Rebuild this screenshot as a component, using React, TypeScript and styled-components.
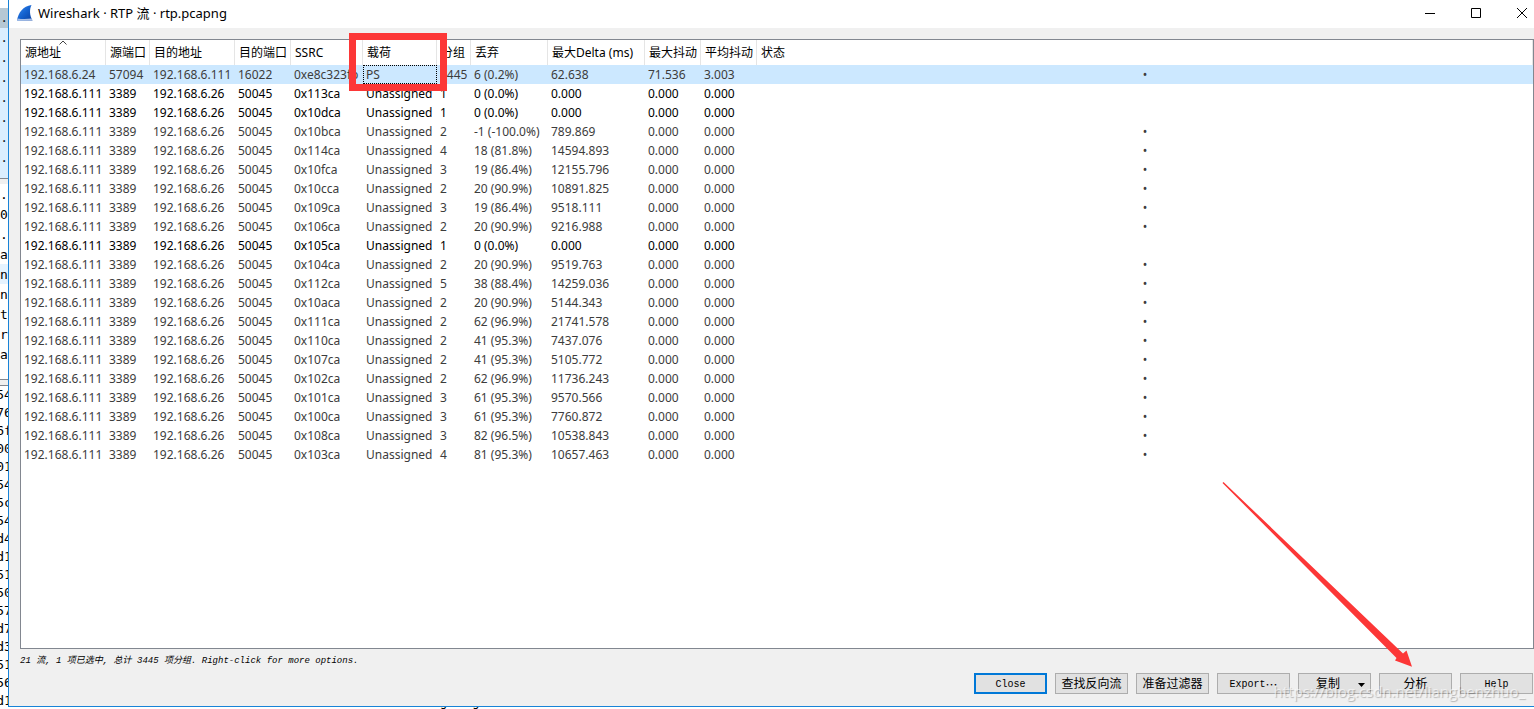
import React from "react";
import styled, { createGlobalStyle, css } from "styled-components";

const uiFont = `"Noto Sans", "Noto Sans CJK SC", sans-serif`;
const monoFont = `"DejaVu Sans Mono", monospace`;
const songFont = `"Liberation Mono", "Noto Sans CJK SC", monospace`;
const red = "#fc3737";

const GlobalStyle = createGlobalStyle`
  *, *::before, *::after { box-sizing: border-box; }
  body { margin: 0; background: #fff; color: #000; font: 12px ${uiFont}; }
  button { font: inherit; color: inherit; padding: 0; border: 0; background: none; }
`;

const Desktop = styled.div`
  display: grid;
  grid-template-columns: 8px minmax(0, 1fr);
  grid-template-rows: minmax(0, 1fr) 2px;
  height: 100vh;
  min-height: 600px;
  overflow: hidden;
`;

/* The main application window peeking out behind the dialog */
const Behind = styled.div`
  grid-row: 1 / 3;
  display: flex;
  flex-direction: column;
  overflow: hidden;
  background: #f0f0f0;
  font-family: ${monoFont};
`;

const Pane = styled.div<{ $grow?: boolean; $height?: number }>`
  flex: ${(p) => (p.$grow ? "1 1 0" : "none")};
  height: ${(p) => (p.$height ? `${p.$height}px` : "auto")};
  overflow: hidden;
  background: #fff;
  border-top: ${(p) => (p.$grow ? "1px solid #828790" : "0")};
`;

const Splitter = styled.div`
  flex: none;
  height: 6px;
  border-top: 1px solid #828790;
`;

const PacketLine = styled.div<{ $bg: string; $height?: number }>`
  display: flex;
  justify-content: flex-end;
  height: ${(p) => p.$height ?? 20}px;
  line-height: 20px;
  overflow: hidden;
  background: ${(p) => p.$bg};
  color: #12272e;
  font-size: 13px;
`;

const TreeLine = styled.div<{ $active?: boolean }>`
  height: 20px;
  padding-top: 2px;
  font-size: 13px;
  line-height: 18px;
  background: ${(p) => (p.$active ? "#e5f3ff" : "#fff")};
`;

const HexLine = styled.div`
  display: flex;
  justify-content: center;
  height: 18px;
  font-size: 13px;
  line-height: 18px;
`;

const BottomEdge = styled.div`
  display: flex;
  align-items: flex-end;
  gap: 25px;
  padding-left: 432px;
  overflow: hidden;
  font: 12px/14px ${monoFont};
`;

const Dialog = styled.main`
  position: relative;
  display: flex;
  flex-direction: column;
  min-width: 0;
  background: #f0f0f0;
  border: solid #1883d7;
  border-width: 0 0 1px 1px;
`;

const TitleBar = styled.header`
  display: flex;
  align-items: center;
  height: 28px;
  padding: 0 7px 3px 8px;
  background: #fff;
`;

const Title = styled.h1`
  flex: 1;
  margin: 0 0 0 5px;
  font-size: 13px;
  font-weight: 400;
  line-height: 20px;
`;

const WindowControls = styled.div`
  display: flex;
  gap: 35px;
`;

const ControlButton = styled.button`
  display: grid;
  place-items: center;
  width: 11px;
  height: 20px;
`;

const Content = styled.section`
  flex: 1;
  display: flex;
  flex-direction: column;
  min-height: 0;
  padding: 11px 0 12px 11px;
`;

const ListFrame = styled.div`
  flex: 1;
  min-height: 0;
  overflow: hidden;
  background: #fff;
  border: 1px solid #828790;
`;

const StreamTable = styled.table`
  width: 100%;
  table-layout: fixed;
  border-collapse: separate;
  border-spacing: 0;
`;

const Column = styled.col<{ $width?: number }>`
  width: ${(p) => (p.$width ? `${p.$width}px` : "auto")};
`;

const HeadCell = styled.th`
  position: relative;
  height: 25px;
  padding: 0 0 0 4px;
  border-right: 1px solid #e5e5e5;
  font-weight: 400;
  line-height: 24px;
  text-align: left;
  white-space: nowrap;
`;

const SortMark = styled.svg`
  position: absolute;
  top: 0;
  left: 50%;
  margin-left: -4px;
`;

const Row = styled.tr<{ $selected: boolean; $dim: boolean }>`
  color: ${(p) => (p.$dim ? "#3c3c3c" : "#000")};
  background: ${(p) => (p.$selected ? "#cce8ff" : "#fff")};
`;

const Cell = styled.td<{ $focused?: boolean; $center?: boolean }>`
  height: 19px;
  padding: ${(p) => (p.$center ? "0" : "0 0 0 3px")};
  line-height: 19px;
  white-space: nowrap;
  text-align: ${(p) => (p.$center ? "center" : "left")};
  ${(p) =>
    p.$focused &&
    css`
      outline: 1px dotted #000;
      outline-offset: -1px;
    `}
`;

const Hint = styled.p`
  margin: 0;
  height: 24px;
  font: italic 9px/24px ${songFont};
  white-space: nowrap;
`;

const ButtonRow = styled.div`
  display: flex;
  justify-content: flex-end;
  gap: 8px;
  padding-right: 1px;
`;

const PushButton = styled.button<{ $latin?: boolean; $default?: boolean; $menu?: boolean }>`
  && {
    display: flex;
    align-items: center;
    justify-content: ${(p) => (p.$menu ? "space-between" : "center")};
    width: 73px;
    height: 21px;
    padding: ${(p) => (p.$menu ? "2px 5px 0 17px" : "2px 0 0")};
    border: ${(p) => (p.$default ? "2px solid #0078d7" : "1px solid #adadad")};
    background: #e1e1e1;
    font: ${(p) => (p.$latin ? 10 : 12)}px/16px ${songFont};
    white-space: nowrap;
  }
`;

const Ellipsis = styled.span`
  font: 12px/16px "Noto Sans CJK SC", sans-serif;
`;

const HighlightBox = styled.div`
  position: absolute;
  left: 340px;
  top: 33px;
  width: 98px;
  height: 58px;
  border: 7px solid ${red};
  pointer-events: none;
`;

const Arrow = styled.svg`
  position: absolute;
  right: 118px;
  bottom: 36px;
  pointer-events: none;
`;

const Watermark = styled.div`
  position: absolute;
  right: 9px;
  bottom: 4px;
  font: 15px/22px "Open Sans", sans-serif;
  color: rgba(255, 255, 255, 0.6);
  text-shadow: 1px 1px 1px rgba(0, 0, 0, 0.25);
  pointer-events: none;
`;

const columns: { label: string; width?: number }[] = [
  { label: "源地址", width: 85 },
  { label: "源端口", width: 44 },
  { label: "目的地址", width: 85 },
  { label: "目的端口", width: 56 },
  { label: "SSRC", width: 72 },
  { label: "载荷", width: 74 },
  { label: "分组", width: 34 },
  { label: "丢弃", width: 77 },
  { label: "最大Delta (ms)", width: 97 },
  { label: "最大抖动", width: 56 },
  { label: "平均抖动", width: 56 },
  { label: "状态" },
];

const common = (ssrc: string, packets: string, lost: string, delta: string) => [
  "192.168.6.111", "3389", "192.168.6.26", "50045", ssrc, "Unassigned",
  packets, lost, delta, "0.000", "0.000", delta === "0.000" ? "" : "•",
];

const streams = [
  ["192.168.6.24", "57094", "192.168.6.111", "16022", "0xe8c323fb", "PS",
    "3445", "6 (0.2%)", "62.638", "71.536", "3.003", "•"],
  common("0x113ca", "1", "0 (0.0%)", "0.000"),
  common("0x10dca", "1", "0 (0.0%)", "0.000"),
  common("0x10bca", "2", "-1 (-100.0%)", "789.869"),
  common("0x114ca", "4", "18 (81.8%)", "14594.893"),
  common("0x10fca", "3", "19 (86.4%)", "12155.796"),
  common("0x10cca", "2", "20 (90.9%)", "10891.825"),
  common("0x109ca", "3", "19 (86.4%)", "9518.111"),
  common("0x106ca", "2", "20 (90.9%)", "9216.988"),
  common("0x105ca", "1", "0 (0.0%)", "0.000"),
  common("0x104ca", "2", "20 (90.9%)", "9519.763"),
  common("0x112ca", "5", "38 (88.4%)", "14259.036"),
  common("0x10aca", "2", "20 (90.9%)", "5144.343"),
  common("0x111ca", "2", "62 (96.9%)", "21741.578"),
  common("0x110ca", "2", "41 (95.3%)", "7437.076"),
  common("0x107ca", "2", "41 (95.3%)", "5105.772"),
  common("0x102ca", "2", "62 (96.9%)", "11736.243"),
  common("0x101ca", "3", "61 (95.3%)", "9570.566"),
  common("0x100ca", "3", "61 (95.3%)", "7760.872"),
  common("0x108ca", "3", "82 (96.5%)", "10538.843"),
  common("0x103ca", "4", "81 (95.3%)", "10657.463"),
];

const treeLines = [".", "0", ".", "a", "n", "n", "t", "r", "a"];
const hexLines = [
  "54", "76", "6f", "00", "01", "54", "5c", "54", "d4",
  "d1", "51", "50", "57", "d7", "d3", "51", "56", "d1",
];

function BehindWindow() {
  return (
    <Behind aria-hidden="true">
      <Pane $height={178}>
        <PacketLine $bg="#fff" $height={8} />
        <PacketLine $bg="#b6c8d4">6.</PacketLine>
        {Array.from({ length: 7 }, (_, i) => (
          <PacketLine key={i} $bg="#daeeff">6.</PacketLine>
        ))}
        <PacketLine $bg="#daeeff" $height={10} />
      </Pane>
      <Splitter />
      <Pane $height={195}>
        {treeLines.map((t, i) => (
          <TreeLine key={i} $active={i === 4}>{t}</TreeLine>
        ))}
      </Pane>
      <Splitter />
      <Pane $grow>
        {hexLines.map((t, i) => (
          <HexLine key={i}>{t}</HexLine>
        ))}
      </Pane>
    </Behind>
  );
}

function SharkFin() {
  return (
    <svg width="16" height="16" viewBox="0 0 16 16" aria-hidden="true">
      <defs>
        <linearGradient id="fin" x1="0" y1="0" x2="1" y2="1">
          <stop offset="0" stopColor="#3d8df0" />
          <stop offset="0.5" stopColor="#1462cf" />
          <stop offset="1" stopColor="#0a3fa0" />
        </linearGradient>
      </defs>
      <path d="M0 15.5 C1.5 7 6 1.5 14.5 0 C12.3 4.5 12.5 10.5 15.5 15.5 Z" fill="url(#fin)" />
      <path d="M0 15.5 L0.6 13.4 C5 14.4 10 14.2 14.5 13.6 L15.6 15.5 Z" fill="#a9bfe6" />
    </svg>
  );
}

export default function App() {
  return (
    <>
      <GlobalStyle />
      <Desktop>
        <BehindWindow />
        <Dialog>
          <TitleBar>
            <SharkFin />
            <Title>Wireshark · RTP 流 · rtp.pcapng</Title>
            <WindowControls>
              <ControlButton aria-label="Minimize">
                <svg width="10" height="10"><path d="M0 5.5H10" stroke="#000" /></svg>
              </ControlButton>
              <ControlButton aria-label="Maximize">
                <svg width="10" height="10"><path d="M.5 .5H9.5V9.5H.5Z" fill="none" stroke="#000" /></svg>
              </ControlButton>
              <ControlButton aria-label="Close window">
                <svg width="10" height="10"><path d="M0 0L10 10M10 0L0 10" stroke="#000" /></svg>
              </ControlButton>
            </WindowControls>
          </TitleBar>
          <Content>
            <ListFrame>
              <StreamTable>
                <colgroup>
                  {columns.map((c) => (
                    <Column key={c.label} $width={c.width} />
                  ))}
                </colgroup>
                <thead>
                  <tr>
                    {columns.map((c, i) => (
                      <HeadCell key={c.label} scope="col">
                        {c.label}
                        {i === 0 && (
                          <SortMark width="8" height="5" viewBox="0 0 8 5">
                            <path d="M.5 4.5L4 1L7.5 4.5" fill="none" stroke="#444" />
                          </SortMark>
                        )}
                      </HeadCell>
                    ))}
                  </tr>
                </thead>
                <tbody>
                  {streams.map((s, r) => (
                    <Row key={s[4]} $selected={r === 0} $dim={s[11] !== ""}>
                      {s.map((v, c) => (
                        <Cell key={c} $focused={r === 0 && c === 5} $center={c === 11}>{v}</Cell>
                      ))}
                    </Row>
                  ))}
                </tbody>
              </StreamTable>
            </ListFrame>
            <Hint>21 流, 1 项已选中, 总计 3445 项分组. Right-click for more options.</Hint>
            <ButtonRow>
              <PushButton $latin $default>Close</PushButton>
              <PushButton>查找反向流</PushButton>
              <PushButton>准备过滤器</PushButton>
              <PushButton $latin>Export<Ellipsis lang="zh-CN">…</Ellipsis></PushButton>
              <PushButton $menu>
                复制
                <svg width="7" height="4" aria-hidden="true"><path d="M0 0H7L3.5 4Z" /></svg>
              </PushButton>
              <PushButton>分析</PushButton>
              <PushButton $latin>Help</PushButton>
            </ButtonRow>
          </Content>
          <HighlightBox />
          <Arrow width="196" height="190" viewBox="0 0 196 190" aria-hidden="true">
            <path d="M3.5 2L183 173.5L186.5 170.5L192 186.8L175 180.5L176.5 178L2.5 3Z" fill={red} />
          </Arrow>
          <Watermark>https://blog.csdn.net/liangbenzhuo_</Watermark>
        </Dialog>
        <BottomEdge aria-hidden="true">
          <span>g</span>
          <span>g</span>
        </BottomEdge>
      </Desktop>
    </>
  );
}
